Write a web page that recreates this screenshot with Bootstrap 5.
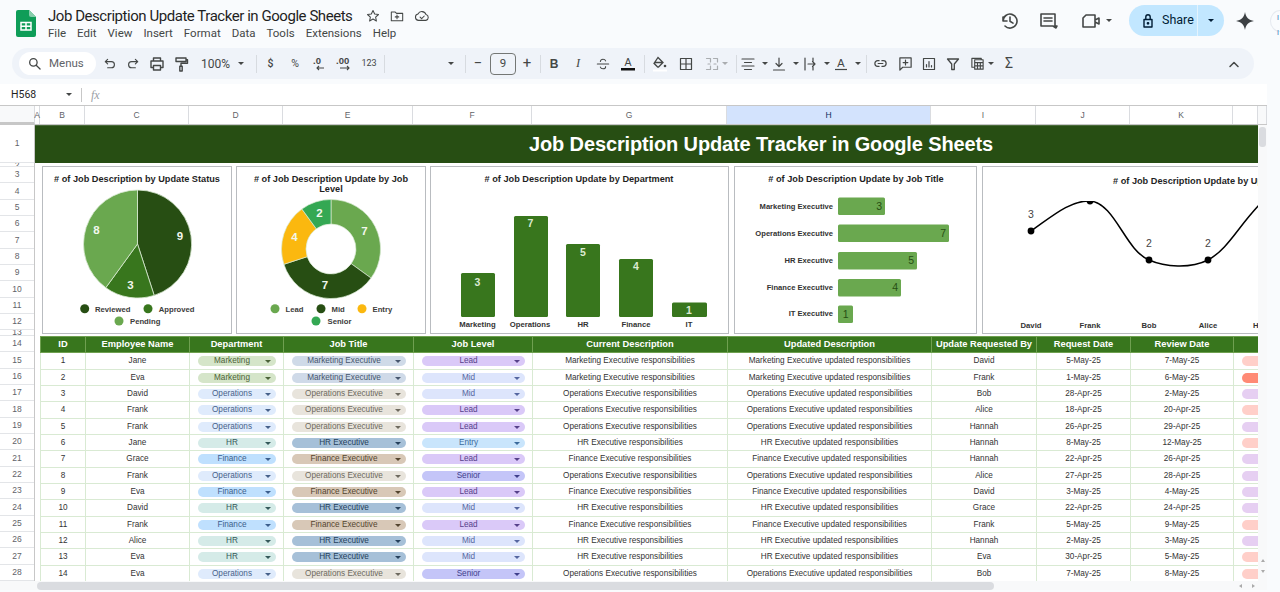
<!DOCTYPE html>
<html lang="en">
<head>
<meta charset="utf-8">
<title>Job Description Update Tracker in Google Sheets</title>
<link href="https://cdn.jsdelivr.net/npm/bootstrap@5.3.0/dist/css/bootstrap.min.css" rel="stylesheet">
<style>
html,body{width:1280px;height:592px;overflow:hidden;background:#f9fbfd;font-family:Roboto,"Liberation Sans",sans-serif;color:#444746}
svg{display:block;flex:none}
.ic{fill:none;stroke:#444746;stroke-width:1.2;stroke-linecap:round;stroke-linejoin:round}
.car{display:inline-block;width:0;height:0;border-left:3px solid transparent;border-right:3px solid transparent;border-top:3px solid #444746;flex:none}
/* header */
.apphead{height:48px;padding-left:16px}
.logo{margin:10px 12px 0 0}
.doc-title{font-size:15px;line-height:20px;letter-spacing:-.45px;color:#1f1f1f;margin:6px 0 0;font-weight:400;white-space:nowrap}
.stats{margin:6px 0 0 14px;gap:10px}
.menu{font-size:11.5px;line-height:16px;margin-top:-1px;color:#444746;white-space:nowrap}
.menu span{margin-right:11px}
.share{width:95px;height:31px;border-radius:16px;background:#c2e7ff;color:#001d35;font-size:12.5px;font-weight:400;margin-left:17px}
.share .l{width:69px;border-right:1px solid #e4f3fd;height:31px;padding-left:12px;gap:7px}
.share .r{width:26px}
.avatar{width:20px;height:22px;border-radius:50%;border:1px solid #e6eaf0;margin-left:15px;color:#2f6fb5;font-size:7px;line-height:15px;padding:0 0 0 6px;flex:none}
.rightacts{margin:5px -10px 0 auto;height:31px}
/* toolbar */
.toolbar{height:31px;margin-left:12px;width:1242px;background:#eff3f9;border-radius:16px;padding:0 8px 0 7px;font-size:11px;color:#444746}
.menus{width:77px;height:23px;background:#fff;border-radius:12px;padding-left:9px;gap:8px;margin-right:1px;color:#5f6368;font-size:11.5px}
.t{width:24px;height:24px;flex:none}
.t20{width:31px;height:24px;flex:none}
.t20 svg{margin-right:7px;margin-left:2px}
.tsep{width:1px;height:18px;background:#d7dbe0;margin:0 3px;flex:none}
.zoomv{width:60px;padding:0 9px 0 8px;font-size:12px}
.fontv{width:73px;padding-right:7px}
.fsz{width:26px;height:22px;border:1px solid #747775;border-radius:4px;font-size:11.5px;flex:none}
.fs9{font-size:9px}
/* formula */
.fbar{height:22px;margin-top:5px;background:#fff;width:1267px;font-size:10.5px;color:#1f1f1f;border-bottom:1px solid #c7c7c7}
.namebox{width:81px;padding:0 9px 0 11px}
.fsep{width:1px;height:14px;background:#c7c7c7}
.fx{font-family:"Liberation Serif",serif;font-style:italic;color:#9aa0a6;font-size:12px;margin-left:9px}
/* sheet */
.sheet{width:1267px;background:#fff;font-family:"Liberation Sans",Arial,sans-serif}
.colheads{height:19px;font-size:8.5px;color:#5f6368;border-bottom:1px solid #c7c7c7}
.corner{width:35px;border-right:3px solid #c7c7c7;border-bottom:3px solid #c7c7c7;margin-bottom:-1px;background:#f8f9fa}
.colheads>div{border-right:1px solid #dadce0;flex:none}
.ch-a{width:5px}.ch-b{width:45px}.ch-c{width:104px}.ch-d{width:94px}.ch-e{width:130px}.ch-f{width:119px}.ch-g{width:195px}.ch-h{width:204px;background:#d3e3fd;color:#0b2e5c}.ch-i{width:105px}.ch-j{width:94px}.ch-k{width:103px}.ch-l{width:25px}
.ch-v{width:9px;background:#f8f9fa}
.sheetbody{height:456px}
.rows{width:35px;flex:none;font-size:8.5px;color:#5f6368;overflow:hidden;border-right:1px solid #c7c7c7}
.rows div{height:16.33px;border-bottom:1px solid #e3e5e8;flex:none}
.rows .r1{height:38px}
.rows .r2{height:4px;line-height:4px;overflow:hidden}
.rows .r13{height:5.7px;line-height:5.7px;overflow:hidden}
.main{width:1223px;flex:none;overflow:hidden}
.band{height:38px;background:#274e13;color:#fff;font-size:20px;font-weight:700;padding:0 0 2px 494px;white-space:nowrap;border-top:1px solid #4a6b3a;letter-spacing:-.13px}
.charts{height:173px;padding:3px 0 2px 7px;gap:4px;overflow:hidden}
.chart{height:168px;border:1px solid #b9bcc0;background:#fff;flex:none;overflow:hidden}
.w190{width:190px}.w299{width:299px;margin-right:1px}.w243{width:243px;margin-right:1px}.w276{width:300px}
svg text{font-family:"Liberation Sans",Arial,sans-serif}
.ct{font-size:9.2px;font-weight:700;fill:#1f1f1f;text-anchor:middle}
.lg{font-size:7.7px;font-weight:700;fill:#3c3c3c}
.ax{font-size:7.7px;font-weight:700;fill:#333;text-anchor:middle}
.yl{font-size:7.6px;font-weight:700;fill:#333;text-anchor:end}
.dl{font-size:11.5px;font-weight:700;fill:#f2f7ee;text-anchor:middle}
.bl{font-size:10.5px;font-weight:700;fill:#dcebd2;text-anchor:middle}
.hl{font-size:10.5px;fill:#274e13;text-anchor:end}
.pt{font-size:10.5px;fill:#444;text-anchor:middle}
.tablewrap{padding-left:5px;width:1223px;overflow:hidden}
.tablewrap .table{width:1218px;table-layout:fixed;margin:0;border-collapse:collapse;font-size:8.2px;color:#333;--bs-table-color:#333;--bs-table-bg:#fff;--bs-table-border-color:#d9ead3}
.tablewrap .table td,.tablewrap .table th{padding:0;height:16.33px;line-height:15px;text-align:center;vertical-align:middle;white-space:nowrap;overflow:hidden;border:1px solid #d9ead3}
.tablewrap .table th{background:#38761d;color:#fff;font-size:9.3px;font-weight:700;border-color:#6fa050}
.pill{height:10px;border-radius:5px;margin:1px 7px 0 8px;position:relative;line-height:10px;padding-right:10px;display:flex;align-items:center;justify-content:center}
.pill .car{position:absolute;right:5px;top:4px;border-top-color:currentColor}
.stat-p{height:10px;width:40px;margin:1px 0 0 8px;border-radius:5px}
.mk{background:#d5e5c9;color:#4b6238}.op{background:#dfebfc;color:#47618a}.hr{background:#d5ebe8;color:#35595a}.fi{background:#bfe0fe;color:#3c5f8d}
.tm{background:#cfdae8;color:#46566e}.to{background:#e8e4dc;color:#6e6a5f}.th{background:#a6c0d8;color:#25405c}.tf{background:#d8c8b7;color:#54452f}
.le{background:#dac9f8;color:#56418a}.mi{background:#dde5fc;color:#5566a0}.en{background:#c9e5fc;color:#3a6a9c}.se{background:#c4c5f8;color:#3f3f8c}
.sp{background:#ffcfc9}.ss{background:#ff8a75}.sl{background:#e6cff2}
.vbar{width:9px;background:#f8f9fa;flex:none;padding:2px 1px 6px}
.vthumb{width:7px;height:20px;background:#dadce0;border-radius:3px}
.hbar{height:9px;background:#f8f9fa;padding-left:37px;width:1267px}
.hthumb{width:957px;height:8px;background:#dadce0;border-radius:4px}
.harrows{margin-left:auto;padding-right:10px;gap:10px}
.tri-l{width:0;height:0;border:2px solid transparent;border-right:3px solid #aaa}
.tri-r{width:0;height:0;border:2px solid transparent;border-left:3px solid #aaa}
.tri-u{width:0;height:0;border:2px solid transparent;border-bottom:3px solid #aaa}
.tri-d{width:0;height:0;border:2px solid transparent;border-top:3px solid #aaa}
</style>
</head>
<body>
<div class="apphead d-flex align-items-start">
  <svg width="20" height="27" viewBox="0 0 20 27" class="logo"><path d="M2 0H13L20 7V25a2 2 0 0 1-2 2H2a2 2 0 0 1-2-2V2a2 2 0 0 1 2-2Z" fill="#0f9d58"/><path d="M13 0L20 7H15a2 2 0 0 1-2-2Z" fill="#87ceac"/><path d="M5 12.5H15V20H5ZM5 16.2H15M10 12.5V20" fill="none" stroke="#fff" stroke-width="1.5"/></svg>
  <div>
    <div class="d-flex align-items-center">
      <h1 class="doc-title">Job Description Update Tracker in Google Sheets</h1>
      <div class="stats d-flex align-items-center">
        <svg width="14" height="14" viewBox="0 0 16 16" class="ic"><path d="M8 1.8l1.9 4 4.4.5-3.3 3 .9 4.4L8 11.5l-3.9 2.2.9-4.4-3.3-3 4.4-.5Z"/></svg>
        <svg width="14" height="14" viewBox="0 0 16 16" class="ic"><path d="M1.500 3.500h4.500l1.500 1.500h7v8.500h-13ZM8 7v4M6 9h4"/></svg>
        <svg width="16" height="14" viewBox="0 0 18 16" class="ic"><path d="M5 13a3.700 3.700 0 0 1-.6-7.300A5 5 0 0 1 13.600 6.400 3.400 3.400 0 0 1 13.500 13ZM6.800 9.200l1.800 1.800 3-3"/></svg>
      </div>
    </div>
    <div class="menu"><span>File</span><span>Edit</span><span>View</span><span>Insert</span><span>Format</span><span>Data</span><span>Tools</span><span>Extensions</span><span>Help</span></div>
  </div>
  <div class="rightacts d-flex align-items-center">
    <svg width="20" height="20" viewBox="0 0 20 20" class="ic" style="stroke-width:1.600"><path d="M3 10a7 7 0 1 1 2 5M3 6v4h4M10 6v4.300l3 1.800"/></svg>
    <svg width="20" height="20" viewBox="0 0 20 20" class="ic" style="margin-left:18px;stroke-width:1.600"><path d="M3 3h14v12h2l-1 2-3-2H3ZM6 7h8M6 10h8"/></svg>
    <svg width="22" height="20" viewBox="0 0 22 20" class="ic" style="margin-left:22px;stroke-width:1.600"><path d="M3 7l3-3h9v12H3ZM15 9l4-2v6l-4-2"/></svg>
    <span class="car ms-1"></span>
    <div class="share d-flex align-items-center">
      <div class="l d-flex align-items-center"><svg width="14" height="16" viewBox="0 0 14 16" class="ic" style="stroke:#001d35;stroke-width:1.400"><path d="M3 6.500h8V14H3ZM4.800 6.500V4a2.200 2.200 0 0 1 4.400 0v2.500"/><circle cx="7" cy="10.300" r=".7" fill="#001d35"/></svg><span>Share</span></div>
      <div class="r d-flex align-items-center justify-content-center"><span class="car" style="border-top-color:#001d35"></span></div>
    </div>
    <svg width="20" height="20" viewBox="0 0 20 20" style="margin-left:11px"><path d="M10 1C10.800 6.200 13.800 9.200 19 10 13.800 10.800 10.800 13.800 10 19 9.200 13.800 6.200 10.800 1 10 6.200 9.200 9.200 6.200 10 1Z" fill="#3c4043"/></svg>
    <div class="avatar">I<br>I</div>
  </div>
</div>

<div class="toolbar d-flex align-items-center">
  <div class="menus d-flex align-items-center"><svg width="13" height="13" viewBox="0 0 14 14" class="ic" style="stroke-width:1.400"><circle cx="5.800" cy="5.800" r="4"/><path d="M8.800 8.800L13 13"/></svg><span>Menus</span></div>
  <div class="t d-flex align-items-center justify-content-center"><svg width="15" height="15" viewBox="0 0 16 16" class="ic"><path d="M6 3.500L3.500 6 6 8.500M3.500 6H10a3 3 0 0 1 0 6.500H6"/></svg></div>
  <div class="t d-flex align-items-center justify-content-center"><svg width="15" height="15" viewBox="0 0 16 16" class="ic"><path d="M10 3.500L12.500 6 10 8.500M12.500 6H6a3 3 0 0 0 0 6.500H10"/></svg></div>
  <div class="t d-flex align-items-center justify-content-center"><svg width="16" height="16" viewBox="0 0 16 16" class="ic" style="stroke-width:1.400"><path d="M4.500 5V2h7v3M4.500 11.500H2V5h12v6.500h-2.500M4.500 9.500h7V14h-7Z"/></svg></div>
  <div class="t d-flex align-items-center justify-content-center"><svg width="16" height="16" viewBox="0 0 16 16" class="ic" style="stroke-width:1.400"><path d="M3 2h10v3.500H3ZM13 3.700h1.500v3.500H8v3M6.800 10.200h2.400V15H6.800Z"/></svg></div>
  <div class="zoomv d-flex align-items-center justify-content-between"><span>100%</span><span class="car"></span></div>
  <div class="tsep" style="margin:0 1px 0 3px"></div>
  <div class="t d-flex align-items-center justify-content-center" style="width:25px"><b style="font-weight:500;font-size:10.500px">$</b></div>
  <div class="t d-flex align-items-center justify-content-center" style="font-size:10.500px">%</div>
  <div class="t d-flex align-items-center justify-content-center"><svg width="18" height="16" viewBox="0 0 18 16"><text x="3" y="8" font-size="9.500" font-weight="700" fill="#444746">.0</text><path d="M14 12H7M9 10l-2 2 2 2" fill="none" stroke="#444746" stroke-width="1.100"/></svg></div>
  <div class="t d-flex align-items-center justify-content-center" style="width:26px"><svg width="20" height="16" viewBox="0 0 20 16"><text x="2" y="8" font-size="9.500" font-weight="700" fill="#444746">.00</text><path d="M6 12h9M13 10l2 2-2 2" fill="none" stroke="#444746" stroke-width="1.100"/></svg></div>
  <div class="t fs9 d-flex align-items-center justify-content-center">123</div>
  <div class="tsep"></div>
  <div class="fontv d-flex align-items-center justify-content-end"><span class="car"></span></div>
  <div class="tsep" style="margin:0 0 0 4px"></div>
  <div class="t d-flex align-items-center justify-content-center" style="font-size:15px">−</div>
  <div class="fsz d-flex align-items-center justify-content-center">9</div>
  <div class="t d-flex align-items-center justify-content-center" style="width:22px;font-size:15px">+</div>
  <div class="tsep" style="margin:0 1px 0 2px"></div>
  <div class="t d-flex align-items-center justify-content-center"><b style="font-size:12px;font-family:'Liberation Sans'">B</b></div>
  <div class="t d-flex align-items-center justify-content-center"><i style="font-size:12.500px;font-family:'Liberation Serif'">I</i></div>
  <div class="t d-flex align-items-center justify-content-center" style="margin-left:1px"><svg width="14" height="14" viewBox="0 0 16 16" class="ic"><path d="M1.500 8h13M11 4.500C10.500 3 9.300 2.500 8 2.500 6.300 2.500 5 3.500 5 5M5 11.500c.5 1.500 1.700 2 3 2 1.700 0 3-1 3-2.500"/></svg></div>
  <div class="t d-flex align-items-center justify-content-center" style="margin-left:1px"><svg width="16" height="16" viewBox="0 0 16 16"><text x="8" y="10" font-size="10.500" text-anchor="middle" fill="#444746">A</text><rect x="1" y="12" width="14" height="2.500" fill="#111"/></svg></div>
  <div class="tsep" style="margin:0 3px 0 4px"></div>
  <div class="t d-flex align-items-center justify-content-center"><svg width="16" height="16" viewBox="0 0 16 16"><path d="M6 1.500L11 6.500 6.800 10.700a1 1 0 0 1-1.400 0L2 7.300ZM3 6.500H11" fill="none" stroke="#444746" stroke-width="1.300"/><circle cx="13" cy="10" r="1.300" fill="#444746"/><rect x="1" y="13.500" width="14" height="2" fill="#fff"/></svg></div>
  <div class="t d-flex align-items-center justify-content-center" style="margin-left:2px"><svg width="14" height="14" viewBox="0 0 14 14" class="ic"><path d="M1.500 1.500H12.500V12.500H1.500ZM7 1.500V12.500M1.500 7H12.500"/></svg></div>
  <div class="d-flex align-items-center" style="width:33px;margin-left:2px;opacity:.4;padding-left:5px;gap:3px"><svg width="14" height="14" viewBox="0 0 14 14" class="ic"><path d="M1.500 1.500h4V5M8.500 1.500h4V5M1.500 12.500h4V9M8.500 12.500h4V9M3 7h2M9 7h2"/></svg><span class="car"></span></div>
  <div class="tsep" style="margin:0 2px 0 3px"></div>
  <div class="t20 d-flex align-items-center"><svg width="14" height="14" viewBox="0 0 14 14" class="ic"><path d="M1 2H13M3.500 5.500H10.500M1 9H13M3.500 12.500H10.500"/></svg><span class="car"></span></div>
  <div class="t20 d-flex align-items-center"><svg width="14" height="14" viewBox="0 0 14 14" class="ic"><path d="M7 1V9M4 6.500L7 9.500 10 6.500M1.500 13H12.500"/></svg><span class="car"></span></div>
  <div class="t20 d-flex align-items-center"><svg width="14" height="14" viewBox="0 0 14 14" class="ic"><path d="M2 1V13M10 1V4M10 10V13M5 7H12M9.500 4.500L12 7 9.500 9.500"/></svg><span class="car"></span></div>
  <div class="t20 d-flex align-items-center"><svg width="14" height="16" viewBox="0 0 14 16"><text x="7" y="10.500" font-size="11" text-anchor="middle" fill="#444746">A</text><path d="M1 13.500H13" stroke="#444746" stroke-width="1.200"/></svg><span class="car"></span></div>
  <div class="tsep" style="margin:0 1px 0 3px"></div>
  <div class="t d-flex align-items-center justify-content-center"><svg width="15" height="15" viewBox="0 0 16 16" class="ic" style="stroke-width:1.300"><path d="M6.500 5H5a3 3 0 0 0 0 6h1.500M9.500 5H11a3 3 0 0 1 0 6H9.500M5.500 8h5"/></svg></div>
  <div class="t d-flex align-items-center justify-content-center" style="margin-left:1px"><svg width="15" height="15" viewBox="0 0 16 16" class="ic" style="stroke-width:1.300"><path d="M2 2H14V12H5L2 15ZM8 4.500V9.500M5.500 7H10.500"/></svg></div>
  <div class="t d-flex align-items-center justify-content-center"><svg width="14" height="14" viewBox="0 0 14 14" class="ic"><path d="M1.500 1.500H12.500V12.500H1.500ZM4.500 10V7.500M7 10V4.500M9.500 10V8.500"/></svg></div>
  <div class="t d-flex align-items-center justify-content-center"><svg width="14" height="14" viewBox="0 0 14 14" class="ic" style="stroke-width:1.300"><path d="M1.500 2H12.500L8.300 7V12.500H5.700V7Z"/></svg></div>
  <div class="d-flex align-items-center" style="width:31px;padding-left:4px;gap:3px;margin-left:1px"><svg width="15" height="15" viewBox="0 0 16 16" class="ic" style="stroke-width:1.200"><path d="M2 2.500H12V4M5 4H14V14H5ZM2 2.500V12H5M5 7H14M8 7V14M11 7V14M5 10.500H14"/></svg><span class="car"></span></div>
  <div class="t d-flex align-items-center justify-content-center" style="font-size:14px">Σ</div>
  <div class="t d-flex align-items-center justify-content-center ms-auto"><svg width="12" height="8" viewBox="0 0 12 8" class="ic" style="stroke-width:1.500"><path d="M2 6.500L6 2.500 10 6.500"/></svg></div>
</div>

<div class="fbar d-flex align-items-center">
  <div class="namebox d-flex align-items-center justify-content-between"><span>H568</span><span class="car"></span></div>
  <div class="fsep"></div>
  <span class="fx">fx</span>
</div>

<div class="sheet">
  <div class="colheads d-flex">
    <div class="corner"></div>
    <div class="ch-a d-flex align-items-center justify-content-center">A</div>
    <div class="ch-b d-flex align-items-center justify-content-center">B</div>
    <div class="ch-c d-flex align-items-center justify-content-center">C</div>
    <div class="ch-d d-flex align-items-center justify-content-center">D</div>
    <div class="ch-e d-flex align-items-center justify-content-center">E</div>
    <div class="ch-f d-flex align-items-center justify-content-center">F</div>
    <div class="ch-g d-flex align-items-center justify-content-center">G</div>
    <div class="ch-h d-flex align-items-center justify-content-center">H</div>
    <div class="ch-i d-flex align-items-center justify-content-center">I</div>
    <div class="ch-j d-flex align-items-center justify-content-center">J</div>
    <div class="ch-k d-flex align-items-center justify-content-center">K</div>
    <div class="ch-l"></div>
    <div class="ch-v"></div>
  </div>
  <div class="sheetbody d-flex">
    <div class="rows d-flex flex-column">
      <div class="r1 d-flex align-items-center justify-content-center">1</div>
      <div class="r2 text-center">2</div>
      <div class="d-flex align-items-center justify-content-center">3</div>
      <div class="d-flex align-items-center justify-content-center">4</div>
      <div class="d-flex align-items-center justify-content-center">5</div>
      <div class="d-flex align-items-center justify-content-center">6</div>
      <div class="d-flex align-items-center justify-content-center">7</div>
      <div class="d-flex align-items-center justify-content-center">8</div>
      <div class="d-flex align-items-center justify-content-center">9</div>
      <div class="d-flex align-items-center justify-content-center">10</div>
      <div class="d-flex align-items-center justify-content-center">11</div>
      <div class="d-flex align-items-center justify-content-center">12</div>
      <div class="r13 text-center">13</div>
      <div class="d-flex align-items-center justify-content-center">14</div>
      <div class="d-flex align-items-center justify-content-center">15</div>
      <div class="d-flex align-items-center justify-content-center">16</div>
      <div class="d-flex align-items-center justify-content-center">17</div>
      <div class="d-flex align-items-center justify-content-center">18</div>
      <div class="d-flex align-items-center justify-content-center">19</div>
      <div class="d-flex align-items-center justify-content-center">20</div>
      <div class="d-flex align-items-center justify-content-center">21</div>
      <div class="d-flex align-items-center justify-content-center">22</div>
      <div class="d-flex align-items-center justify-content-center">23</div>
      <div class="d-flex align-items-center justify-content-center">24</div>
      <div class="d-flex align-items-center justify-content-center">25</div>
      <div class="d-flex align-items-center justify-content-center">26</div>
      <div class="d-flex align-items-center justify-content-center">27</div>
      <div class="d-flex align-items-center justify-content-center">28</div>
    </div>
    <div class="main">
      <div class="band d-flex align-items-center">Job Description Update Tracker in Google Sheets</div>
      <div class="charts d-flex">
        <div class="chart w190">
          <svg width="188" height="166" viewBox="43 167 188 166">
            <text class="ct" x="137" y="182"># of Job Description by Update Status</text>
            <g stroke="#d9ead3" stroke-width=".8">
              <path d="M137.500 244V190A54 54 0 0 1 154.200 295.400Z" fill="#274e13"/>
              <path d="M137.500 244L154.200 295.400A54 54 0 0 1 105.800 287.700Z" fill="#38761d"/>
              <path d="M137.500 244L105.800 287.700A54 54 0 0 1 137.500 190Z" fill="#6aa84f"/>
            </g>
            <text class="dl" x="180" y="240">9</text><text class="dl" x="130.500" y="289">3</text><text class="dl" x="96.500" y="234">8</text>
            <circle cx="84.700" cy="308.700" r="4.500" fill="#274e13"/><text class="lg" x="95" y="311.500">Reviewed</text>
            <circle cx="148" cy="308.700" r="4.500" fill="#38761d"/><text class="lg" x="158.700" y="311.500">Approved</text>
            <circle cx="119" cy="321" r="4.500" fill="#6aa84f"/><text class="lg" x="130" y="323.500">Pending</text>
          </svg>
        </div>
        <div class="chart w190">
          <svg width="188" height="166" viewBox="237 167 188 166">
            <text class="ct" x="331" y="182"><tspan x="331" y="182"># of Job Description Update by Job</tspan><tspan x="331" y="192">Level</tspan></text>
            <g stroke="#d9ead3" stroke-width=".7">
              <path d="M331 199.500A49.500 49.500 0 0 1 371.050 278.100L351.200 263.700A25 25 0 0 0 331 224Z" fill="#6aa84f"/>
              <path d="M371.050 278.100A49.500 49.500 0 0 1 283.900 264.300L307.200 256.700A25 25 0 0 0 351.200 263.700Z" fill="#274e13"/>
              <path d="M283.900 264.300A49.500 49.500 0 0 1 301.900 209L316.300 228.800A25 25 0 0 0 307.200 256.700Z" fill="#fbb80f"/>
              <path d="M301.900 209A49.500 49.500 0 0 1 331 199.500L331 224A25 25 0 0 0 316.300 228.800Z" fill="#34a853"/>
            </g>
            <text class="dl" x="364.500" y="235">7</text><text class="dl" x="325" y="289">7</text><text class="dl" x="294.500" y="241">4</text><text class="dl" x="319.500" y="217">2</text>
            <circle cx="275" cy="308.700" r="4.500" fill="#6aa84f"/><text class="lg" x="285.500" y="311.500">Lead</text>
            <circle cx="321" cy="308.700" r="4.500" fill="#274e13"/><text class="lg" x="331.500" y="311.500">Mid</text>
            <circle cx="362" cy="308.700" r="4.500" fill="#fbb80f"/><text class="lg" x="372.500" y="311.500">Entry</text>
            <circle cx="316" cy="321" r="4.500" fill="#34a853"/><text class="lg" x="327.500" y="323.500">Senior</text>
          </svg>
        </div>
        <div class="chart w299">
          <svg width="297" height="166" viewBox="431 167 297 166">
            <text class="ct" x="579" y="182"># of Job Description Update by Department</text>
            <g fill="#38761d">
              <rect x="461" y="273" width="34" height="44" rx="1.500"/>
              <rect x="514" y="216" width="34" height="101" rx="1.500"/>
              <rect x="566" y="244" width="34" height="73" rx="1.500"/>
              <rect x="619" y="259" width="34" height="58" rx="1.500"/>
              <rect x="672" y="302.500" width="35" height="14.500" rx="1.500"/>
            </g>
            <text class="bl" x="477.500" y="285.500">3</text><text class="bl" x="530.500" y="227">7</text><text class="bl" x="583" y="256">5</text><text class="bl" x="636" y="270">4</text><text class="bl" x="689" y="314">1</text>
            <text class="ax" x="477.500" y="327">Marketing</text><text class="ax" x="530" y="327">Operations</text><text class="ax" x="583" y="327">HR</text><text class="ax" x="636" y="327">Finance</text><text class="ax" x="689" y="327">IT</text>
          </svg>
        </div>
        <div class="chart w243">
          <svg width="241" height="166" viewBox="735 167 241 166">
            <text class="ct" x="856" y="181.500"># of Job Description Update by Job Title</text>
            <g fill="#6aa84f">
              <rect x="838" y="197.500" width="47" height="17.500" rx="1.500"/>
              <rect x="838" y="224.500" width="111" height="17.500" rx="1.500"/>
              <rect x="838" y="252" width="79" height="17.500" rx="1.500"/>
              <rect x="838" y="279" width="63" height="17.500" rx="1.500"/>
              <rect x="838" y="305.500" width="15" height="17.500" rx="1.500"/>
            </g>
            <text class="yl" x="833" y="208.500">Marketing Executive</text><text class="yl" x="833" y="235.500">Operations Executive</text><text class="yl" x="833" y="262.500">HR Executive</text><text class="yl" x="833" y="289.500">Finance Executive</text><text class="yl" x="833" y="316">IT Executive</text>
            <text class="hl" x="882" y="209.500">3</text><text class="hl" x="946" y="236.500">7</text><text class="hl" x="914" y="264">5</text><text class="hl" x="898" y="291">4</text><text class="hl" x="848.500" y="317.500">1</text>
          </svg>
        </div>
        <div class="chart w276">
          <svg width="298" height="166" viewBox="983 167 298 166">
            <defs><clipPath id="lineclip"><rect x="983" y="201" width="298" height="132"/></clipPath></defs>
            <text class="ct" x="1113" y="184" style="text-anchor:start"># of Job Description Update by Update Requested By</text>
            <g clip-path="url(#lineclip)">
              <path d="M1031 231C1050 218 1070 200 1090 201 1115 203 1125 250 1149 260 1165 267 1190 269 1208 260 1230 248 1240 222 1267 197" fill="none" stroke="#000" stroke-width="1.500"/>
              <circle cx="1090" cy="201" r="3.400"/>
            </g>
            <circle cx="1031" cy="231" r="3.400"/><circle cx="1149" cy="260" r="3.400"/><circle cx="1208" cy="260" r="3.400"/>
            <text class="pt" x="1031" y="218">3</text><text class="pt" x="1149" y="247">2</text><text class="pt" x="1208" y="247">2</text>
            <text class="ax" x="1031" y="328">David</text><text class="ax" x="1090" y="328">Frank</text><text class="ax" x="1149" y="328">Bob</text><text class="ax" x="1208" y="328">Alice</text><text class="ax" x="1267" y="328">Hannah</text>
          </svg>
        </div>
      </div>
      <div class="tablewrap">
        <table class="table table-bordered">
          <colgroup><col style="width:45px"><col style="width:104px"><col style="width:94px"><col style="width:130px"><col style="width:119px"><col style="width:195px"><col style="width:204px"><col style="width:105px"><col style="width:94px"><col style="width:103px"><col style="width:25px"></colgroup>
          <thead><tr><th>ID</th><th>Employee Name</th><th>Department</th><th>Job Title</th><th>Job Level</th><th>Current Description</th><th>Updated Description</th><th>Update Requested By</th><th>Request Date</th><th>Review Date</th><th></th></tr></thead>
          <tbody>
<tr><td>1</td><td>Jane</td><td><div class="pill mk">Marketing<span class="car"></span></div></td><td><div class="pill tm">Marketing Executive<span class="car"></span></div></td><td><div class="pill le">Lead<span class="car"></span></div></td><td>Marketing Executive responsibilities</td><td>Marketing Executive updated responsibilities</td><td>David</td><td>5-May-25</td><td>7-May-25</td><td><div class="stat-p sp"></div></td></tr>
<tr><td>2</td><td>Eva</td><td><div class="pill mk">Marketing<span class="car"></span></div></td><td><div class="pill tm">Marketing Executive<span class="car"></span></div></td><td><div class="pill mi">Mid<span class="car"></span></div></td><td>Marketing Executive responsibilities</td><td>Marketing Executive updated responsibilities</td><td>Frank</td><td>1-May-25</td><td>6-May-25</td><td><div class="stat-p ss"></div></td></tr>
<tr><td>3</td><td>David</td><td><div class="pill op">Operations<span class="car"></span></div></td><td><div class="pill to">Operations Executive<span class="car"></span></div></td><td><div class="pill mi">Mid<span class="car"></span></div></td><td>Operations Executive responsibilities</td><td>Operations Executive updated responsibilities</td><td>Bob</td><td>28-Apr-25</td><td>2-May-25</td><td><div class="stat-p sl"></div></td></tr>
<tr><td>4</td><td>Frank</td><td><div class="pill op">Operations<span class="car"></span></div></td><td><div class="pill to">Operations Executive<span class="car"></span></div></td><td><div class="pill le">Lead<span class="car"></span></div></td><td>Operations Executive responsibilities</td><td>Operations Executive updated responsibilities</td><td>Alice</td><td>18-Apr-25</td><td>20-Apr-25</td><td><div class="stat-p sp"></div></td></tr>
<tr><td>5</td><td>Frank</td><td><div class="pill op">Operations<span class="car"></span></div></td><td><div class="pill to">Operations Executive<span class="car"></span></div></td><td><div class="pill le">Lead<span class="car"></span></div></td><td>Operations Executive responsibilities</td><td>Operations Executive updated responsibilities</td><td>Hannah</td><td>26-Apr-25</td><td>29-Apr-25</td><td><div class="stat-p sl"></div></td></tr>
<tr><td>6</td><td>Jane</td><td><div class="pill hr">HR<span class="car"></span></div></td><td><div class="pill th">HR Executive<span class="car"></span></div></td><td><div class="pill en">Entry<span class="car"></span></div></td><td>HR Executive responsibilities</td><td>HR Executive updated responsibilities</td><td>Hannah</td><td>8-May-25</td><td>12-May-25</td><td><div class="stat-p sp"></div></td></tr>
<tr><td>7</td><td>Grace</td><td><div class="pill fi">Finance<span class="car"></span></div></td><td><div class="pill tf">Finance Executive<span class="car"></span></div></td><td><div class="pill le">Lead<span class="car"></span></div></td><td>Finance Executive responsibilities</td><td>Finance Executive updated responsibilities</td><td>Hannah</td><td>22-Apr-25</td><td>26-Apr-25</td><td><div class="stat-p sl"></div></td></tr>
<tr><td>8</td><td>Frank</td><td><div class="pill op">Operations<span class="car"></span></div></td><td><div class="pill to">Operations Executive<span class="car"></span></div></td><td><div class="pill se">Senior<span class="car"></span></div></td><td>Operations Executive responsibilities</td><td>Operations Executive updated responsibilities</td><td>Alice</td><td>27-Apr-25</td><td>28-Apr-25</td><td><div class="stat-p sl"></div></td></tr>
<tr><td>9</td><td>Eva</td><td><div class="pill fi">Finance<span class="car"></span></div></td><td><div class="pill tf">Finance Executive<span class="car"></span></div></td><td><div class="pill le">Lead<span class="car"></span></div></td><td>Finance Executive responsibilities</td><td>Finance Executive updated responsibilities</td><td>David</td><td>3-May-25</td><td>4-May-25</td><td><div class="stat-p sl"></div></td></tr>
<tr><td>10</td><td>David</td><td><div class="pill hr">HR<span class="car"></span></div></td><td><div class="pill th">HR Executive<span class="car"></span></div></td><td><div class="pill mi">Mid<span class="car"></span></div></td><td>HR Executive responsibilities</td><td>HR Executive updated responsibilities</td><td>Grace</td><td>22-Apr-25</td><td>24-Apr-25</td><td><div class="stat-p sl"></div></td></tr>
<tr><td>11</td><td>Frank</td><td><div class="pill fi">Finance<span class="car"></span></div></td><td><div class="pill tf">Finance Executive<span class="car"></span></div></td><td><div class="pill le">Lead<span class="car"></span></div></td><td>Finance Executive responsibilities</td><td>Finance Executive updated responsibilities</td><td>Frank</td><td>5-May-25</td><td>9-May-25</td><td><div class="stat-p sp"></div></td></tr>
<tr><td>12</td><td>Alice</td><td><div class="pill hr">HR<span class="car"></span></div></td><td><div class="pill th">HR Executive<span class="car"></span></div></td><td><div class="pill mi">Mid<span class="car"></span></div></td><td>HR Executive responsibilities</td><td>HR Executive updated responsibilities</td><td>Hannah</td><td>2-May-25</td><td>3-May-25</td><td><div class="stat-p sl"></div></td></tr>
<tr><td>13</td><td>Eva</td><td><div class="pill hr">HR<span class="car"></span></div></td><td><div class="pill th">HR Executive<span class="car"></span></div></td><td><div class="pill mi">Mid<span class="car"></span></div></td><td>HR Executive responsibilities</td><td>HR Executive updated responsibilities</td><td>Eva</td><td>30-Apr-25</td><td>5-May-25</td><td><div class="stat-p sp"></div></td></tr>
<tr><td>14</td><td>Eva</td><td><div class="pill op">Operations<span class="car"></span></div></td><td><div class="pill to">Operations Executive<span class="car"></span></div></td><td><div class="pill se">Senior<span class="car"></span></div></td><td>Operations Executive responsibilities</td><td>Operations Executive updated responsibilities</td><td>Bob</td><td>7-May-25</td><td>8-May-25</td><td><div class="stat-p sp"></div></td></tr>
          </tbody>
        </table>
      </div>
    </div>
    <div class="vbar d-flex flex-column align-items-center">
      <div class="vthumb"></div>
      <div class="tri-u mt-auto"></div>
      <div class="tri-d" style="margin-top:8px"></div>
    </div>
  </div>
  <div class="hbar d-flex align-items-center">
    <div class="hthumb"></div>
    <div class="harrows d-flex align-items-center"><span class="tri-l"></span><span class="tri-r"></span></div>
  </div>
</div>
<script src="https://cdn.jsdelivr.net/npm/bootstrap@5.3.0/dist/js/bootstrap.bundle.min.js"></script>
</body>
</html>
